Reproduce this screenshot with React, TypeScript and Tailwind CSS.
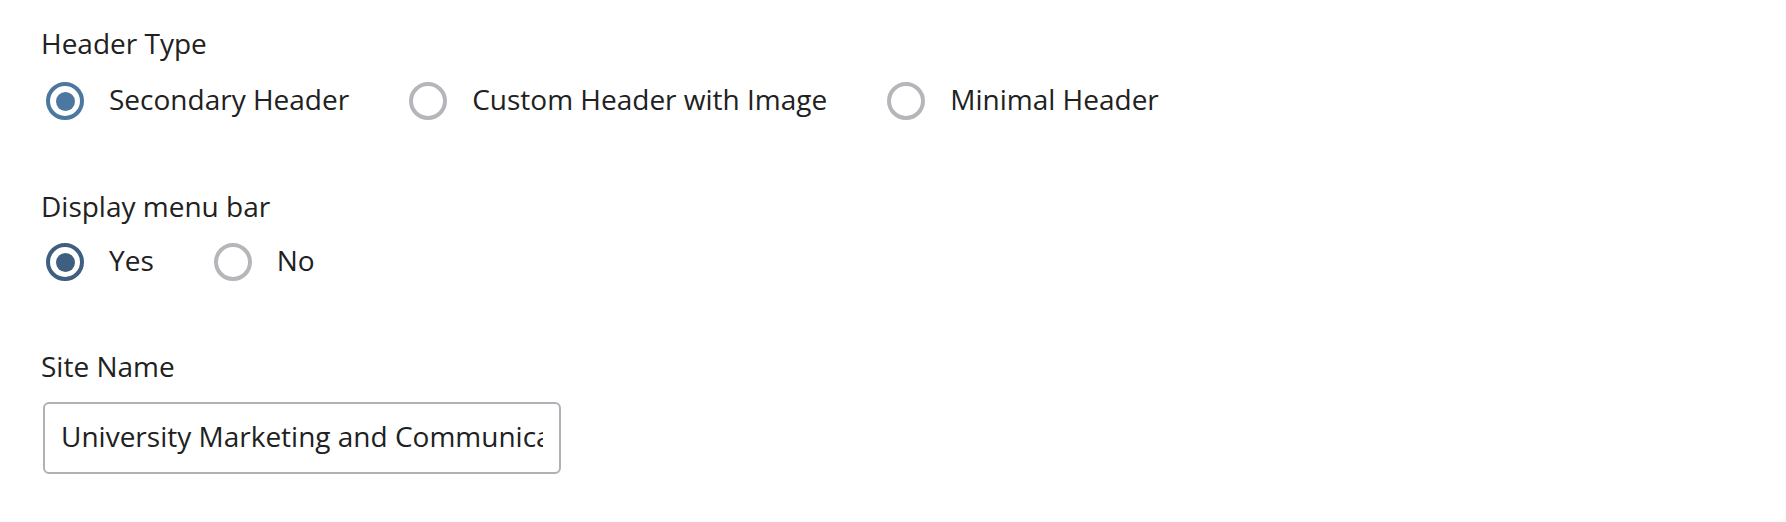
import { useState } from 'react';

type Option = { value: string; label: string };

function RadioGroup({
  name,
  options,
  value,
  onChange,
  accent,
}: {
  name: string;
  options: Option[];
  value: string;
  onChange: (v: string) => void;
  accent: 'light' | 'dark';
}) {
  return (
    <div className="ml-[5px] flex items-center gap-[60px]">
      {options.map((opt) => {
        const checked = opt.value === value;
        return (
          <label key={opt.value} className="flex items-center gap-[25px] cursor-pointer">
            <input
              type="radio"
              name={name}
              value={opt.value}
              checked={checked}
              onChange={() => onChange(opt.value)}
              className="sr-only"
            />
            {checked ? (
              <span
                className={
                  accent === 'light'
                    ? 'w-[38px] h-[38px] rounded-full border-[4px] border-[#4b77a1] flex items-center justify-center'
                    : 'w-[38px] h-[38px] rounded-full border-[4px] border-[#3f5f81] flex items-center justify-center'
                }
              >
                <span
                  className={
                    accent === 'light'
                      ? 'w-[19px] h-[19px] rounded-full bg-[#4b77a1]'
                      : 'w-[19px] h-[19px] rounded-full bg-[#3f5f81]'
                  }
                />
              </span>
            ) : (
              <span className="w-[38px] h-[38px] rounded-full border-[4px] border-[#b4b6ba] bg-white" />
            )}
            <span className="leading-[34px] pb-[4px]">{opt.label}</span>
          </label>
        );
      })}
    </div>
  );
}

export default function App() {
  const [headerType, setHeaderType] = useState('secondary');
  const [menuBar, setMenuBar] = useState('yes');
  const [siteName, setSiteName] = useState('University Marketing and Communications');

  return (
    <div className="min-h-screen bg-white pl-[41px] pt-[23px] font-['Open_Sans',sans-serif] text-[28px] leading-[40px] text-[#212121]">
      {/* Header type */}
      <div>Header Type</div>
      <div className="mt-[19px]">
        <RadioGroup
          name="header-type"
          value={headerType}
          onChange={setHeaderType}
          accent="light"
          options={[
            { value: 'secondary', label: 'Secondary Header' },
            { value: 'custom', label: 'Custom Header with Image' },
            { value: 'minimal', label: 'Minimal Header' },
          ]}
        />
      </div>

      {/* Menu bar */}
      <div className="mt-[66px]">Display menu bar</div>
      <div className="mt-[17px]">
        <RadioGroup
          name="menu-bar"
          value={menuBar}
          onChange={setMenuBar}
          accent="dark"
          options={[
            { value: 'yes', label: 'Yes' },
            { value: 'no', label: 'No' },
          ]}
        />
      </div>

      {/* Site name */}
      <div className="mt-[65px]">Site Name</div>
      <input
        type="text"
        value={siteName}
        onChange={(e) => setSiteName(e.target.value)}
        className="mt-[16px] ml-[2px] block w-[518px] h-[72px] px-[16px] pb-[4px] border-2 border-[#aeb1b5] rounded-[6px] bg-white text-[#212121] outline-none"
      />
    </div>
  );
}
